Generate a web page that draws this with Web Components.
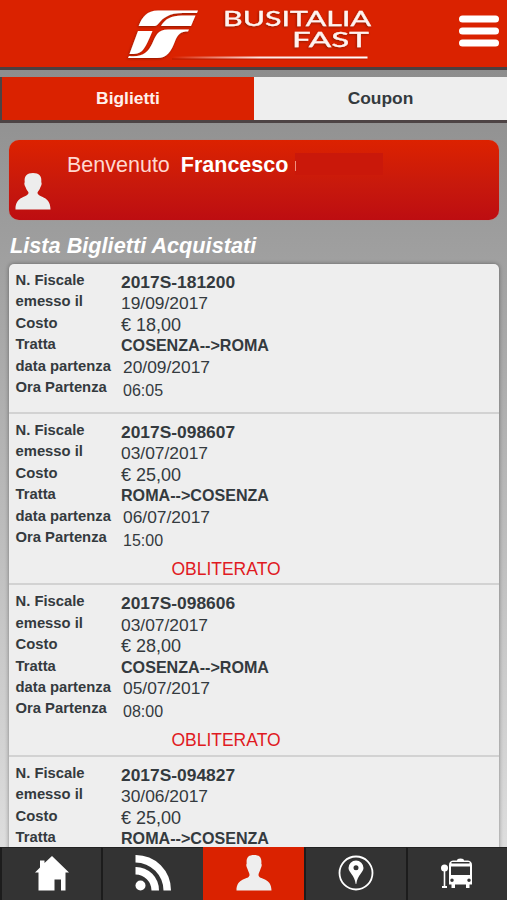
<!DOCTYPE html>
<html lang="it">
  <head>
    <meta charset="utf-8" />
    <meta name="viewport" content="width=device-width, initial-scale=1">
    <title>Busitalia Fast</title>
    <style>
      html, body {
        margin: 0;
        height: 100%;
        overflow: hidden;
      }
      body {
        font-family: "Liberation Sans", Arial, sans-serif;
        color: #343a3e;
      }
    </style>
  </head>
  <body>
    <bus-app>
      <bus-header slot="header"></bus-header>
      <bus-tabs slot="tabs">
        <bus-tab active>Biglietti</bus-tab>
        <bus-tab>Coupon</bus-tab>
      </bus-tabs>
      <bus-welcome>Francesco</bus-welcome>
      <bus-list>
        <span slot="title">Lista Biglietti Acquistati</span>
        <bus-ticket code="2017S-181200" issued="19/09/2017" cost="€ 18,00" route="COSENZA-->ROMA" day="20/09/2017" hour="06:05"></bus-ticket>
        <bus-ticket code="2017S-098607" issued="03/07/2017" cost="€ 25,00" route="ROMA-->COSENZA" day="06/07/2017" hour="15:00">OBLITERATO</bus-ticket>
        <bus-ticket code="2017S-098606" issued="03/07/2017" cost="€ 28,00" route="COSENZA-->ROMA" day="05/07/2017" hour="08:00">OBLITERATO</bus-ticket>
        <bus-ticket code="2017S-094827" issued="30/06/2017" cost="€ 25,00" route="ROMA-->COSENZA"></bus-ticket>
      </bus-list>
      <bus-nav slot="footer"></bus-nav>
    </bus-app>

    <template id="app">
      <style>
        :host {
          display: flex;
          flex-direction: column;
          height: 100vh;
          background: linear-gradient(#8c8c8c 60px, #a0a0a0 260px, #dedede 850px);
        }
        main {
          flex: 1;
          min-height: 0;
          overflow: hidden;
          padding: 17px 8px 0 9px;
        }
      </style>
      <slot name="header"></slot>
      <slot name="tabs"></slot>
      <main><slot></slot></main>
      <slot name="footer"></slot>
    </template>

    <template id="header">
      <style>
        :host {
          display: flex;
          flex: none;
          box-sizing: border-box;
          height: 70px;
          background: #da2200;
          border-bottom: 3px solid #4b3f40;
        }
        svg {
          display: block;
        }
      </style>
      <svg width="507" height="67" viewBox="0 0 507 67">
        <defs>
          <linearGradient id="line" x1="0" x2="1">
            <stop offset="0" stop-color="#fff" stop-opacity="0" />
            <stop offset=".45" stop-color="#fff" stop-opacity=".9" />
            <stop offset="1" stop-color="#fff" />
          </linearGradient>
          <filter id="shadow" x="-10%" y="-10%" width="120%" height="130%">
            <feDropShadow dx="-.8" dy="1" stdDeviation=".8" flood-color="#7c1200" flood-opacity=".8" />
          </filter>
        </defs>
        <g filter="url(#shadow)" fill="#fff">
          <path d="M138.700 26 C142 17 147 10.500 158 10.500 H198 L197 13 H183 C169 13 163 18 159 23 C157 25.500 156 26 153 26Z" />
          <path d="M161 26 C165 19 171 15.500 182 15.500 H195.500 L191 26Z" />
          <path d="M138 31 H152.500 C149 39 146 47 142 51 C139 53.500 136 54 129.500 54Z" />
          <path d="M128 58 L129 56 C143 57.500 148 52 152 44 C156 36 157 29.500 168 29.500 H189 L188 31.500 C181 31.500 178 34 175.500 40 C171 52 167 58 157 58Z" />
        </g>
        <g filter="url(#shadow)" fill="#fff4f0" stroke="#fff4f0" stroke-width=".3" font-family="Lato, sans-serif" font-size="21">
          <text x="223" y="26" textLength="148" lengthAdjust="spacingAndGlyphs">BUSITALIA</text>
          <text x="292" y="47" textLength="77" lengthAdjust="spacingAndGlyphs">FAST</text>
        </g>
        <rect x="172" y="58.500" width="195" height="1" fill="#7c1200" opacity=".4" />
        <rect x="172" y="56.500" width="195.500" height="2" fill="url(#line)" />
        <g fill="#fff">
          <rect x="459" y="15.500" width="40" height="7" rx="3.500" />
          <rect x="459" y="27.500" width="40" height="7" rx="3.500" />
          <rect x="459" y="39.500" width="40" height="7" rx="3.500" />
        </g>
      </svg>
    </template>

    <template id="tabs">
      <style>
        :host {
          display: flex;
          flex: none;
          height: 43.500px;
          margin-top: 6.500px;
          border-bottom: 3px solid #4d4344;
          border-left: 2px solid #4d4344;
        }
      </style>
      <slot></slot>
    </template>

    <template id="tab">
      <style>
        :host {
          display: flex;
          flex: 1;
          align-items: center;
          justify-content: center;
          box-sizing: border-box;
          background: #eee;
          font-size: 17.4px;
          font-weight: bold;
        }
        :host([active]) {
          flex: 0 0 252px;
          background: #da2200;
          color: #fff0ec;
        }
      </style>
      <slot></slot>
    </template>

    <template id="welcome">
      <style>
        :host {
          display: flex;
          box-sizing: border-box;
          height: 80px;
          padding: 12px 0 0 6px;
          border-radius: 10px;
          background: linear-gradient(#dc2200, #c8190c 55%, #bd0d11);
          box-shadow: 0 0 1px #d66a5c;
          color: #fff;
          font-size: 21.5px;
          line-height: 27px;
        }
        svg {
          width: 36px;
          height: 38px;
          margin: 21px 16px 0 0;
        }
        .hello {
          margin-right: 11px;
          color: #ffd8d0;
        }
        .mask {
          width: 87px;
          height: 22px;
          margin: 1px 0 0 7px;
          border-left: 1px solid transparent;
          border-image: linear-gradient(transparent 38%, #f0907e 38%, #f0907e 78%, transparent 78%) 1;
          background: #ca180a;
        }
      </style>
      <svg viewBox="0 0 36 38"><path fill="#ededed" d="M18 0 C24 0 27 3 26.300 9 C27.300 11 26 13 25.300 14.500 C24.500 17 23 18 22.500 19.500 C22.500 25 35.500 22 35.500 36.500 H.500 C.500 22 13.500 25 13.500 19.500 C13 18 11.500 17 10.700 14.500 C10 13 8.700 11 9.700 9 C9 3 12 0 18 0Z" /></svg>
      <span class="hello">Benvenuto</span>
      <b><slot></slot></b>
      <span class="mask"></span>
    </template>

    <template id="list">
      <style>
        :host {
          display: block;
        }
        h2 {
          margin: 11px 0 3px;
          padding-left: 1px;
          height: 30px;
          line-height: 30px;
          font-size: 21.7px;
          font-style: italic;
          color: #fff;
        }
        .items {
          border-radius: 5px;
          background: #eee;
          box-shadow: 0 0 4px rgba(0, 0, 0, .4);
        }
      </style>
      <h2><slot name="title"></slot></h2>
      <div class="items"><slot></slot></div>
    </template>

    <template id="ticket">
      <style>
        :host {
          display: block;
          box-sizing: border-box;
          height: 171.4px;
          border-bottom: 2px solid #d2d2d2;
        }
        :host(:first-of-type) {
          height: 150px;
        }
        dl {
          display: grid;
          grid-template-columns: 105.500px auto;
          grid-auto-rows: 21.4px;
          margin: 0;
          padding: 6px 0 0 6.500px;
        }
        dt {
          font-size: 14.8px;
          font-weight: bold;
          line-height: 21px;
        }
        dd {
          margin: 2px 0 0;
          font-size: 17.4px;
          line-height: 21px;
          white-space: nowrap;
        }
        .code {
          font-weight: bold;
        }
        .cost {
          font-size: 18px;
        }
        .route {
          margin-top: 1px;
          font-size: 16.1px;
          font-weight: bold;
        }
        .day {
          margin-top: 1px;
          padding-left: 2px;
        }
        .hour {
          margin-top: 3px;
          padding-left: 2px;
          font-size: 16px;
        }
        .state {
          width: 434px;
          padding-top: 10.600px;
          text-align: center;
          font-size: 17.500px;
          line-height: 20px;
          color: #e01a22;
        }
      </style>
      <dl>
        <dt>N. Fiscale</dt><dd class="code"></dd>
        <dt>emesso il</dt><dd class="issued"></dd>
        <dt>Costo</dt><dd class="cost"></dd>
        <dt>Tratta</dt><dd class="route"></dd>
        <dt class="departure">data partenza</dt><dd class="day"></dd>
        <dt class="departure">Ora Partenza</dt><dd class="hour"></dd>
      </dl>
      <div class="state"><slot></slot></div>
    </template>

    <template id="nav">
      <style>
        :host {
          display: grid;
          grid-template-columns: repeat(5, 1fr);
          flex: none;
          height: 53px;
          background: #333;
        }
        a {
          display: flex;
          justify-content: center;
          box-sizing: border-box;
          padding-top: 6px;
          border-left: 2px solid #1c1c1c;
          border-top: 1px solid #222;
        }
        a.active {
          background: #da2200;
          border-color: #da2200;
        }
        svg {
          width: 38px;
          height: 38px;
          fill: #fff;
        }
      </style>
      <a><svg viewBox="0 0 38 38"><path d="M19 2 L36 18.500 H32.500 V36.500 H28 V25.500 H21.500 V36.500 H5.500 V18.500 H2 L7 13.500 V6.500 H11.500 V9Z" /></svg></a>
      <a><svg viewBox="0 0 38 38"><circle cx="6.500" cy="31.500" r="5" /><path d="M1.500 1 A35 35 0 0 1 37 36.500 H29.500 A28 28 0 0 0 1.500 8.500Z M1.500 13 A23 23 0 0 1 25 36.500 H17.500 A16 16 0 0 0 1.500 20.500Z" /></svg></a>
      <a class="active"><svg viewBox="0 0 36 38"><path fill="#eee" d="M18 1 C23.500 1 26 3.500 25.300 9.500 C26.300 11 25.300 13 24.500 15 C23.500 18 22.500 19 22.500 21 C22.500 26 35.500 23 35.500 36.500 H.500 C.500 23 13.500 26 13.500 21 C13.500 19 12.500 18 11.500 15 C10.700 13 9.700 11 10.700 9.500 C10 3.500 12.500 1 18 1Z" /></svg></a>
      <a><svg viewBox="0 0 38 38"><circle cx="19" cy="19" r="16.500" fill="none" stroke="#fff" stroke-width="1.800" /><path fill-rule="evenodd" d="M19 6.500 A7.500 7.500 0 0 1 26.500 14 C26.500 18.500 20.500 20.500 19.300 30 H18.700 C17.500 20.500 11.500 18.500 11.500 14 A7.500 7.500 0 0 1 19 6.500Z M19 11.200 A2.500 2.500 0 1 0 19 16.200 A2.500 2.500 0 1 0 19 11.200Z" /></svg></a>
      <a><svg viewBox="0 0 38 38"><circle cx="6.500" cy="14" r="3.500" /><path d="M5.700 16 H7.300 V32 H9 V34 H4 V32 H5.700Z" /><path fill-rule="evenodd" d="M19 6.500 Q19 4.500 22.500 4.500 Q26 4.500 26 6.500 H30 Q34 7 34 11 V30.500 H31.500 V34 H28 V30.500 H17 V34 H13.500 V30.500 H11 V11 Q11 7 15 6.500Z M13.500 8 V9.500 H31.500 V8Z M13 12.500 V21 H32 V12.500Z M14 24.500 A1.700 1.700 0 1 0 14 28 A1.700 1.700 0 1 0 14 24.500Z M31 24.500 A1.700 1.700 0 1 0 31 28 A1.700 1.700 0 1 0 31 24.500Z" /></svg></a>
    </template>

    <script>
      class BusElement extends HTMLElement {
        connectedCallback() {
          if (!this.shadowRoot) {
            const template = document.getElementById(this.localName.replace("bus-", ""))
            this.attachShadow({ mode: "open" })
            this.shadowRoot.appendChild(template.content.cloneNode(true))
            this.render()
          }
        }
        render() {}
      }

      class BusTicket extends BusElement {
        render() {
          for (const name of ["code", "issued", "cost", "route", "day", "hour"]) {
            this.shadowRoot.querySelector("." + name).textContent = this.getAttribute(name)
          }
          // no departure rows while the departure is unknown
          if (!this.hasAttribute("day")) {
            this.shadowRoot.querySelectorAll(".departure, .day, .hour").forEach(el => el.remove())
          }
        }
      }

      customElements.define("bus-app", class extends BusElement {})
      customElements.define("bus-header", class extends BusElement {})
      customElements.define("bus-tabs", class extends BusElement {})
      customElements.define("bus-tab", class extends BusElement {})
      customElements.define("bus-welcome", class extends BusElement {})
      customElements.define("bus-list", class extends BusElement {})
      customElements.define("bus-ticket", BusTicket)
      customElements.define("bus-nav", class extends BusElement {})
    </script>
  </body>
</html>
